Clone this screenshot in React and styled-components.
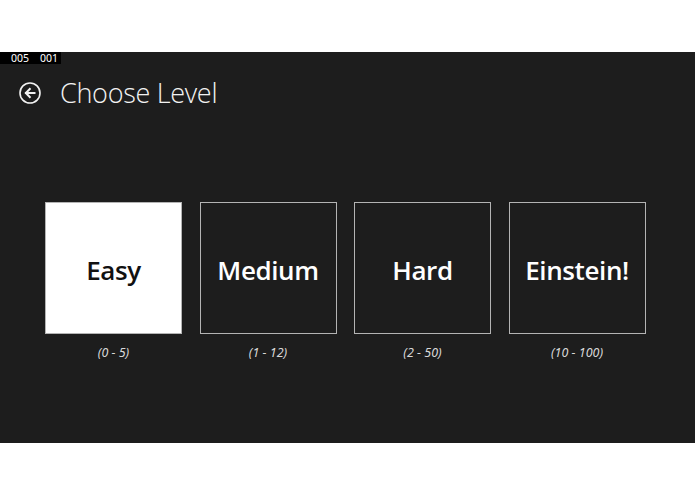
import React from "react";
import styled, { createGlobalStyle } from "styled-components";

const Global = createGlobalStyle`
  html, body { margin: 0; padding: 0; background: #ffffff; }
  body { font-family: "Open Sans", "Noto Sans", sans-serif; }
`;

const Page = styled.div`
  width: 695px;
  height: 494px;
  padding-top: 52px;
  box-sizing: border-box;
  background: #ffffff;
`;

const Screen = styled.div`
  position: relative;
  height: 391px;
  background: #1d1d1d;
  display: flex;
  flex-direction: column;
`;

const Counter = styled.div`
  position: absolute;
  left: 0;
  top: 0;
  width: 61px;
  height: 12px;
  background: #000;
  color: #fff;
  font-family: "Noto Sans", sans-serif;
  font-size: 10.5px;
  line-height: 12px;
  display: flex;
  gap: 11px;
  padding-left: 11px;
  box-sizing: border-box;
`;

const Header = styled.div`
  display: flex;
  align-items: center;
  padding: 23px 0 0 19px;
  height: 36px;
`;

const BackButton = styled.div`
  width: 22px;
  height: 22px;
  display: flex;
  align-items: center;
  justify-content: center;
  margin-right: 19px;
`;

const Title = styled.h1`
  margin: 0;
  font-family: "Open Sans", sans-serif;
  font-weight: 300;
  font-size: 27px;
  color: #f2f2f2;
  letter-spacing: -0.3px;
  line-height: 36px;
`;

const Levels = styled.div`
  display: flex;
  gap: 17.5px;
  padding: 91px 0 0 45px;
`;

const Level = styled.div`
  width: 137px;
  display: flex;
  flex-direction: column;
  align-items: center;
`;

const Tile = styled.div`
  width: 137px;
  height: 132px;
  box-sizing: border-box;
  border: 1px solid #b4b4b4;
  background: ${(p) => (p.$selected ? "#ffffff" : "transparent")};
  color: ${(p) => (p.$selected ? "#111111" : "#ffffff")};
  display: flex;
  align-items: center;
  justify-content: center;
  padding-top: 4px;
  font-family: "Open Sans", sans-serif;
  font-weight: 600;
  font-size: 26px;
  letter-spacing: -0.4px;
`;

const Range = styled.div`
  margin-top: 10px;
  font-family: "Noto Sans", sans-serif;
  font-style: italic;
  font-size: 12.5px;
  color: #d8d8d8;
  line-height: 18px;
`;

const BackIcon = () => (
  <svg width="22" height="22" viewBox="0 0 22 22">
    <circle cx="11" cy="11" r="10" fill="none" stroke="#f2f2f2" strokeWidth="1.6" />
    <path d="M15.5 11H7M10.8 7L6.8 11l4 4" fill="none" stroke="#f2f2f2" strokeWidth="2" strokeLinecap="square" />
  </svg>
);

const levels = [
  { name: "Easy", range: "(0 - 5)", selected: true },
  { name: "Medium", range: "(1 - 12)" },
  { name: "Hard", range: "(2 - 50)" },
  { name: "Einstein!", range: "(10 - 100)" },
];

export default function App() {
  return (
    <Page>
      <Global />
      <Screen>
        <Counter>
          <span>005</span>
          <span>001</span>
        </Counter>
        <Header>
          <BackButton>
            <BackIcon />
          </BackButton>
          <Title>Choose Level</Title>
        </Header>
        <Levels>
          {levels.map((l) => (
            <Level key={l.name}>
              <Tile $selected={l.selected}>{l.name}</Tile>
              <Range>{l.range}</Range>
            </Level>
          ))}
        </Levels>
      </Screen>
    </Page>
  );
}
